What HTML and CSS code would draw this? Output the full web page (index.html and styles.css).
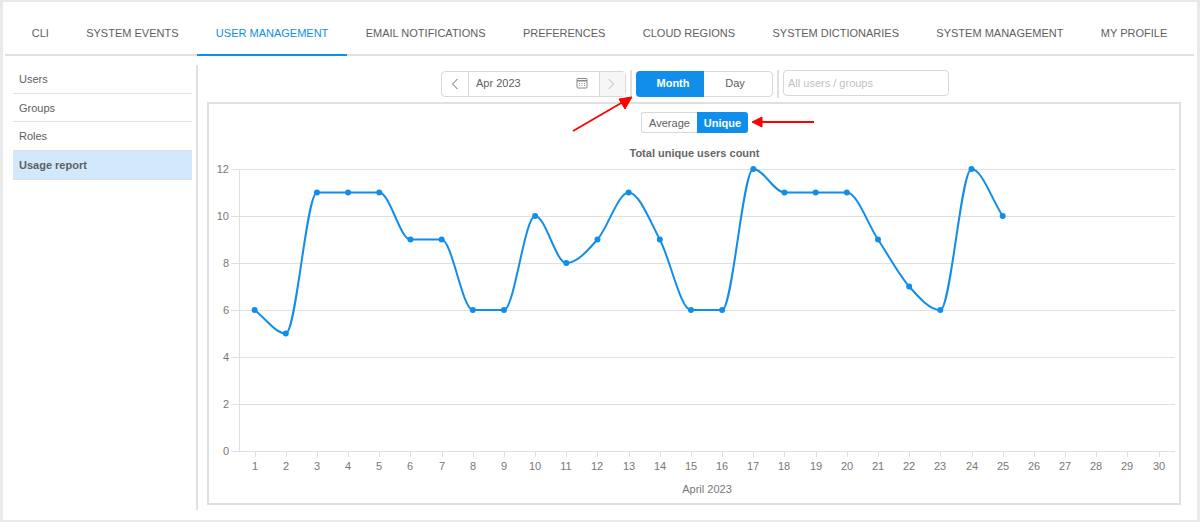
FILE: index.html
```html
<!DOCTYPE html>
<html lang="en">
<head>
    <meta charset="UTF-8">
    <title>Usage report</title>
    <link rel="stylesheet" href="styles.css">
</head>
<body>
    <div class="panel">
        <nav class="tabs">
            <a class="tab">CLI</a>
            <a class="tab">SYSTEM EVENTS</a>
            <a class="tab tab-active">USER MANAGEMENT</a>
            <a class="tab">EMAIL NOTIFICATIONS</a>
            <a class="tab">PREFERENCES</a>
            <a class="tab">CLOUD REGIONS</a>
            <a class="tab">SYSTEM DICTIONARIES</a>
            <a class="tab">SYSTEM MANAGEMENT</a>
            <a class="tab">MY PROFILE</a>
        </nav>

        <div class="main">
            <ul class="side-menu">
                <li class="side-item">Users</li>
                <li class="side-item">Groups</li>
                <li class="side-item">Roles</li>
                <li class="side-item side-item-active">Usage report</li>
            </ul>

            <div class="content">
                <div class="toolbar">
                    <div class="date-picker">
                        <button class="date-btn">
                            <svg width="8" height="12" viewBox="0 0 8 12"><path d="M6.5 1 1.5 6l5 5" fill="none" stroke="#666" stroke-width="1"/></svg>
                        </button>
                        <div class="date-value">
                            <span>Apr 2023</span>
                            <svg width="12" height="12" viewBox="0 0 12 12">
                                <rect x="1" y="1.5" width="10" height="9.5" rx="1" fill="none" stroke="#888"/>
                                <path d="M1 3h10v1.5H1z" fill="#888"/>
                                <path d="M3 6.5h1M5.5 6.5h1M8 6.5h1M3 8.5h1M5.5 8.5h1M8 8.5h1" stroke="#888"/>
                            </svg>
                        </div>
                        <button class="date-btn date-btn-disabled">
                            <svg width="8" height="12" viewBox="0 0 8 12"><path d="M1.5 1l5 5-5 5" fill="none" stroke="#bbb" stroke-width="1"/></svg>
                        </button>
                    </div>
                    <span class="separator"></span>
                    <div class="switch">
                        <button class="switch-btn switch-btn-active">Month</button>
                        <button class="switch-btn">Day</button>
                    </div>
                    <span class="separator"></span>
                    <div class="user-filter">All users / groups</div>
                </div>

                <div class="card">
                    <div class="mini-switch">
                        <button class="mini-btn">Average</button>
                        <button class="mini-btn mini-btn-active">Unique</button>
                    </div>
                    <svg id="chart" class="chart" viewBox="209 133 971 370"></svg>
                </div>
            </div>
        </div>

        <svg class="arrows" viewBox="0 0 1194 518">
            <path d="M570 129 620 100" stroke="#f00" stroke-width="1.8"/>
            <path d="M629 95 616 97 622 107z" fill="#f00" stroke="#f00"/>
            <path d="M811 120H757" stroke="#f00" stroke-width="1.8"/>
            <path d="M749 120 759 115V125z" fill="#f00" stroke="#f00"/>
        </svg>
    </div>

    <script src="chart.js"></script>
</body>
</html>
```

FILE: styles.css
```css
* {
    box-sizing: border-box;
}

body {
    margin: 0;
    padding: 2px 3px;
    height: 522px;
    overflow: hidden;
    background-color: #e9e9e9;
    font-family: "Liberation Sans", Arial, sans-serif;
    font-size: 11px;
    color: #606060;
}

button {
    font: inherit;
    color: inherit;
    border: none;
    background: none;
    padding: 0;
}

.panel {
    position: relative;
    height: 518px;
    background-color: #fff;
}

.tabs {
    display: flex;
    height: 54px;
    margin: 0 3px 0 2px;
    padding-left: 8px;
    border-bottom: 2px solid #e0e0e0;
}

.tab {
    height: 54px;
    padding: 0 18.7px;
    line-height: 62px;
    white-space: nowrap;
}

.tab-active {
    color: #108ee9;
    border-bottom: 2px solid #108ee9;
}

.main {
    display: flex;
    padding-top: 9px;
}

.side-menu {
    width: 179px;
    height: 115px;
    margin: 0 4px 0 10px;
    padding: 0;
    list-style: none;
}

.side-item {
    height: 28.67px;
    padding-left: 6px;
    line-height: 28px;
    border-bottom: 1px solid #e0e0e0;
}

.side-item-active {
    height: 29px;
    font-weight: bold;
    background-color: #d2e9fb;
}

.content {
    width: 985px;
    height: 445px;
    border-left: 2px solid #e0e0e0;
    padding-left: 9px;
}

.toolbar {
    display: flex;
    align-items: center;
    height: 37px;
    padding-left: 234px;
}

.date-picker {
    display: flex;
    width: 185px;
    height: 26px;
    border: 1px solid #d9d9d9;
    border-radius: 4px;
}

.date-btn {
    display: flex;
    align-items: center;
    justify-content: center;
    width: 26px;
}

.date-btn-disabled {
    padding-right: 4px;
    background-color: #f6f6f6;
    border-left: 1px solid #d9d9d9;
}

.date-value {
    display: flex;
    flex: 1;
    align-items: center;
    justify-content: space-between;
    padding: 0 11px 2px 7px;
    border-left: 1px solid #d9d9d9;
}

.separator {
    width: 2px;
    height: 28px;
    margin: 0 4px;
    background-color: #e0e0e0;
}

.switch {
    display: flex;
    width: 137px;
    height: 26px;
    border: 1px solid #d9d9d9;
    border-radius: 4px;
}

.switch-btn {
    flex: 1;
    padding: 0 6px 2px 0;
}

.switch-btn-active {
    flex: none;
    width: 68px;
    margin: -1px 0 -1px -1px;
    padding: 0 0 2px 6px;
    color: #fff;
    font-weight: bold;
    background-color: #108ee9;
    border-radius: 4px 0 0 4px;
}

.user-filter {
    width: 166px;
    height: 26px;
    margin-top: -2px;
    padding-left: 4px;
    line-height: 24px;
    color: #bfbfbf;
    border: 1px solid #d9d9d9;
    border-radius: 4px;
}

.card {
    height: 403px;
    padding-top: 8px;
    border: 2px solid #e0e0e0;
}

.mini-switch {
    display: flex;
    width: 107px;
    height: 21px;
    margin-left: 432px;
}

.mini-btn {
    width: 56px;
    border: 1px solid #d9d9d9;
    border-right: none;
    border-radius: 3px 0 0 3px;
}

.mini-btn-active {
    width: 51px;
    color: #fff;
    font-weight: bold;
    background-color: #108ee9;
    border: none;
    border-radius: 0 3px 3px 0;
}

.chart {
    display: block;
    width: 971px;
    height: 370px;
    font-size: 11px;
}

.chart-title {
    font-weight: bold;
    fill: #666;
}

.chart-label {
    fill: #777;
}

.arrows {
    position: absolute;
    top: 0;
    left: 0;
    width: 1194px;
    height: 518px;
    pointer-events: none;
}
```

FILE: chart.js
```js
const users = [6, 5, 11, 11, 11, 9, 9, 6, 6, 10, 8, 9, 11, 9, 6, 6, 12, 11, 11, 11, 9, 7, 6, 12, 10];

const chart = document.getElementById('chart');
const plotLeft = 239.5, plotRight = 1175, plotTop = 169, plotBottom = 451;

const xFor = day => 254.6 + (day - 1) * 31.17;
const yFor = value => plotBottom - value * (plotBottom - plotTop) / 12;

function add(name, attrs, text) {
    const el = document.createElementNS('http://www.w3.org/2000/svg', name);
    Object.keys(attrs).forEach(key => el.setAttribute(key, attrs[key]));
    if (text !== undefined) el.textContent = text;
    chart.appendChild(el);
    return el;
}

// same curve as chart.js monotone interpolation
function monotonePath(points) {
    const slopes = [];
    for (let i = 0; i < points.length - 1; i++) {
        slopes.push((points[i + 1].y - points[i].y) / (points[i + 1].x - points[i].x));
    }
    const tangents = points.map((p, i) => {
        if (i === 0) return slopes[0];
        if (i === points.length - 1) return slopes[i - 1];
        if (slopes[i - 1] * slopes[i] <= 0) return 0;
        return (slopes[i - 1] + slopes[i]) / 2;
    });
    for (let i = 0; i < slopes.length; i++) {
        if (slopes[i] === 0) {
            tangents[i] = 0;
            tangents[i + 1] = 0;
            continue;
        }
        const a = tangents[i] / slopes[i];
        const b = tangents[i + 1] / slopes[i];
        const size = Math.hypot(a, b);
        if (size > 3) {
            tangents[i] = 3 / size * a * slopes[i];
            tangents[i + 1] = 3 / size * b * slopes[i];
        }
    }
    let d = `M${points[0].x} ${points[0].y}`;
    for (let i = 0; i < slopes.length; i++) {
        const p = points[i], q = points[i + 1], h = (q.x - p.x) / 3;
        d += `C${p.x + h} ${p.y + tangents[i] * h} ${q.x - h} ${q.y - tangents[i + 1] * h} ${q.x} ${q.y}`;
    }
    return d;
}

add('text', { x: 694.5, y: 157, 'text-anchor': 'middle', class: 'chart-title' }, 'Total unique users count');

for (let value = 0; value <= 12; value += 2) {
    const y = Math.round(yFor(value)) + 0.5;
    add('path', { d: `M231 ${y}H${plotRight}`, stroke: '#e0e0e0' });
    add('text', { x: 229, y: y + 3, 'text-anchor': 'end', class: 'chart-label' }, value);
}

add('path', { d: `M${plotLeft} ${plotTop}V${plotBottom}`, stroke: '#e0e0e0' });

for (let day = 1; day <= 30; day++) {
    const x = Math.round(xFor(day)) + 0.5;
    add('path', { d: `M${x} ${plotBottom}v6`, stroke: '#e0e0e0' });
    add('text', { x: x - 0.5, y: 470, 'text-anchor': 'middle', class: 'chart-label' }, day);
}

add('text', { x: 707, y: 493, 'text-anchor': 'middle', class: 'chart-label' }, 'April 2023');

const points = users.map((value, i) => ({ x: xFor(i + 1), y: yFor(value) }));
add('path', { d: monotonePath(points), fill: 'none', stroke: '#108ee9', 'stroke-width': 2 });
points.forEach(p => add('circle', { cx: p.x, cy: p.y, r: 3, fill: '#108ee9' }));
```
